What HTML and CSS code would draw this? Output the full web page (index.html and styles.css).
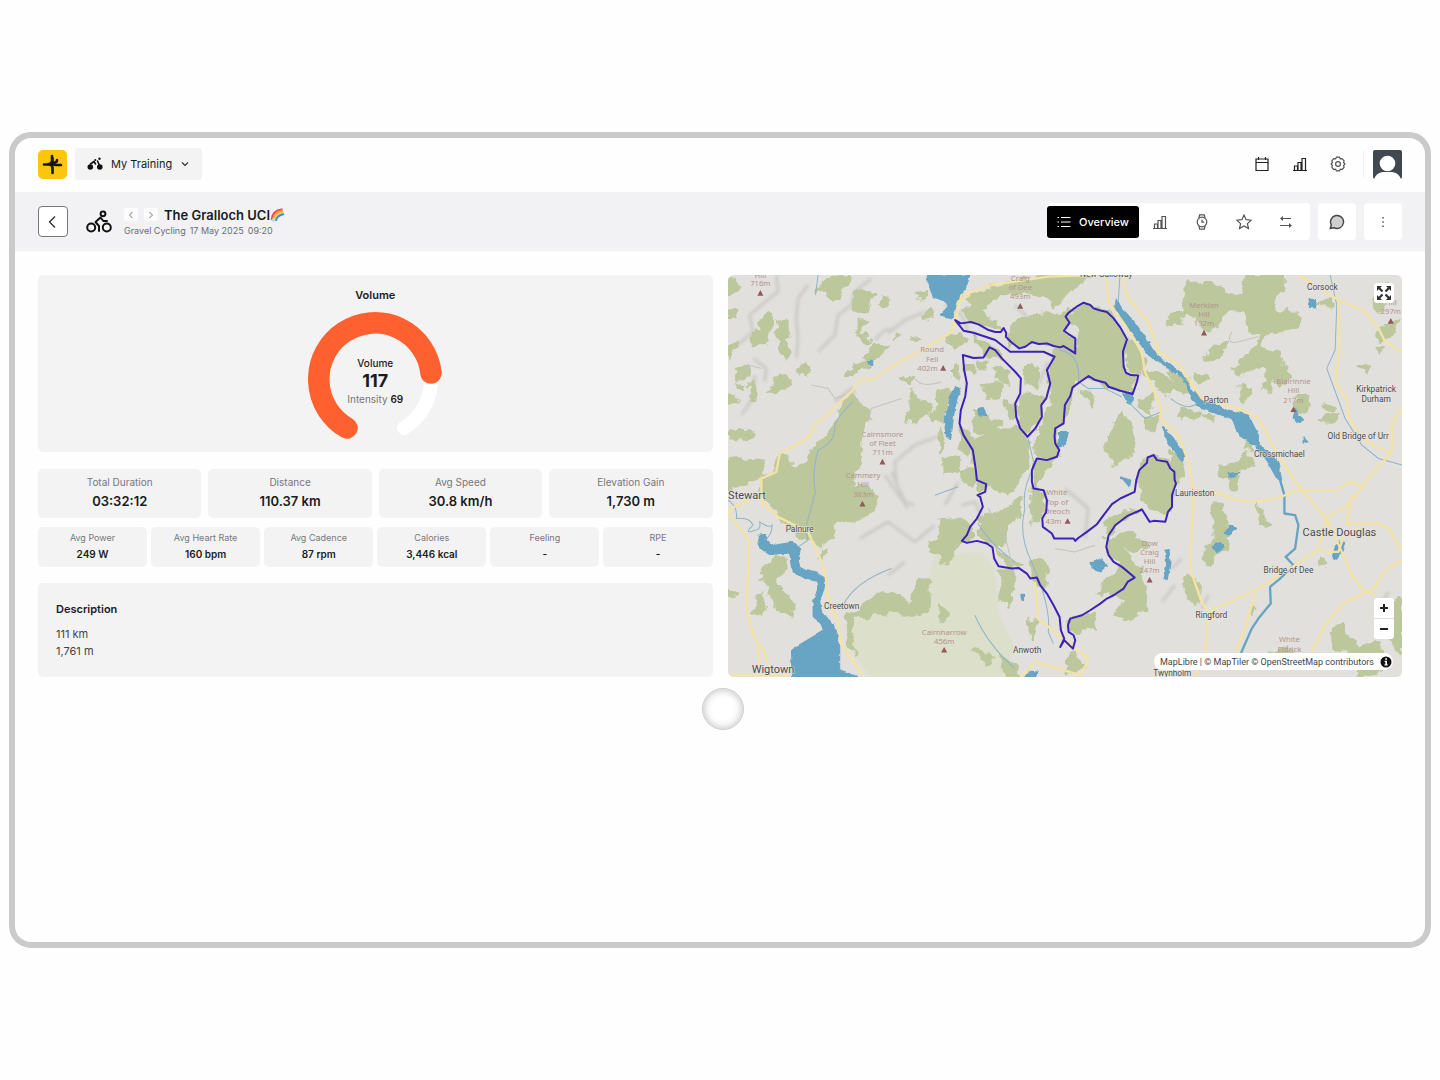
FILE: index.html
```html
<!DOCTYPE html>
<html lang="en">
<head>
<meta charset="utf-8">
<meta name="viewport" content="width=device-width, initial-scale=1">
<title>The Gralloch UCI</title>
<link rel="stylesheet" href="styles.css">
</head>
<body>
<div class="frame">
  <header class="topbar">
    <a class="logo" href="#" aria-label="Home">
      <svg viewBox="0 0 29 29" width="29" height="29"><rect width="29" height="29" rx="5" fill="#fcc60c"/><path d="M14 6v4.500q0 3.500-3.500 3.500M6 14.500h5q3.500 0 3.500 3.500v5M14.500 8v3.500q0 3.500 3.500 3.500h5M16.500 12.500q2.500 0 2.500-2.500" fill="none" stroke="#17150c" stroke-width="2.600" stroke-linecap="round"/></svg>
    </a>
    <button class="switcher" type="button">
      <svg viewBox="0 0 16 14" width="16" height="14"><circle cx="3.300" cy="10" r="2.800" fill="#111"/><circle cx="12.800" cy="10" r="2.800" fill="#111"/><path d="M3.500 7L7 4.500 8.500 7M10.500 4l2 4.500" fill="none" stroke="#111" stroke-width="1.600" stroke-linecap="round"/><circle cx="12.500" cy="1.800" r="1.200" fill="#111"/><circle cx="8.300" cy="3" r="1" fill="#111"/></svg>
      <span>My Training</span>
      <svg viewBox="0 0 8 8" width="8" height="8"><path d="M1 2.500l3 3 3-3" fill="none" stroke="#333" stroke-width="1.200"/></svg>
    </button>
    <nav class="tools" aria-label="Tools">
      <a href="#" aria-label="Calendar"><svg viewBox="0 0 16 16" width="16" height="16"><path d="M2 3h12v11.500H2zM2 6.500h12M4.500 1v3M11.500 1v3" class="line"/></svg></a>
      <a href="#" aria-label="Statistics"><svg viewBox="0 0 16 16" width="16" height="16"><path d="M1 14.500h14M2.500 14v-4h3v4M6 14V6.500h3V14M10 14V2.500h3.500V14" class="line"/></svg></a>
      <a href="#" aria-label="Settings"><svg viewBox="0 0 16 16" width="16" height="16"><circle cx="8" cy="8" r="2.400" class="line soft"/><path d="M6.500 1.200h3l.8 1.600 1.800-.2 2 2.200-.5 1.700 1.300 1.500-1.300 1.600.5 1.700-2 2.200-1.800-.3-.8 1.600h-3l-.9-1.600-1.800.3-2-2.200.6-1.700L1.100 8l1.300-1.500-.6-1.700 2-2.200 1.800.2z" class="line soft"/></svg></a>
    </nav>
    <a class="avatar" href="#" aria-label="Profile">
      <svg viewBox="0 0 29 29" width="29" height="29"><rect width="29" height="29" rx="2" fill="#424850"/><circle cx="14.500" cy="13.500" r="7.800" fill="#fff"/><path d="M1 29q2-6 9-7h9q7 1 9 7z" fill="#fff"/></svg>
    </a>
  </header>

  <section class="subbar">
    <button class="back" type="button" aria-label="Back"><svg viewBox="0 0 14 14" width="14" height="14"><path d="M9 1.500L3.500 7 9 12.500" fill="none" stroke="#222" stroke-width="1.200"/></svg></button>
    <svg class="sport" viewBox="0 0 26 24" width="26" height="24"><g fill="none" stroke="#111" stroke-width="2" stroke-linecap="round" stroke-linejoin="round"><circle cx="5.200" cy="17.500" r="4"/><circle cx="20.800" cy="17.500" r="4"/><circle cx="17" cy="3.800" r="2.400"/><path d="M13 21v-5L9.500 12l5-4.500 2.800 3.500H21"/></g></svg>
    <div class="heading">
      <div class="title-row">
        <button class="step" type="button" aria-label="Previous"><svg viewBox="0 0 8 8" width="8" height="8"><path d="M5.500 1l-3 3 3 3" fill="none" stroke="#777"/></svg></button>
        <button class="step" type="button" aria-label="Next"><svg viewBox="0 0 8 8" width="8" height="8"><path d="M2.500 1l3 3-3 3" fill="none" stroke="#777"/></svg></button>
        <h1>The Gralloch UCI</h1>
        <svg viewBox="0 0 15 14" width="15" height="14" aria-label="Rainbow"><g fill="none" stroke-width="1.900"><path d="M1.500 12Q2 2.500 12.500 1.200" stroke="#e8533f"/><path d="M3 12.500Q3.500 4.500 13 2.800" stroke="#f39a3b"/><path d="M4.500 13Q5 6 13.500 4.400" stroke="#f0d255"/><path d="M6 13Q6.500 7.500 14 6" stroke="#3f93d0"/></g><circle cx="3.500" cy="12" r="1.800" fill="#b9d4e8"/></svg>
      </div>
      <p class="meta"><span>Gravel Cycling</span><span>17 May 2025</span><span>09:20</span></p>
    </div>
    <div class="tabs">
      <button class="tab tab-active" type="button"><svg viewBox="0 0 14 12" width="14" height="12"><path d="M4 1.500h9.500M4 6h9.500M4 10.500h9.500M.5 1.500H2M.5 6H2M.5 10.500H2" fill="none" stroke="#fff" stroke-width="1.200"/></svg><span>Overview</span></button>
      <button class="tab" type="button" aria-label="Charts"><svg viewBox="0 0 16 16" width="16" height="16"><path d="M1 14.500h14M2.500 14v-4h3v4M6 14V6.500h3V14M10 14V2.500h3.500V14" class="line soft"/></svg></button>
      <button class="tab" type="button" aria-label="Device"><svg viewBox="0 0 16 16" width="16" height="16"><circle cx="8" cy="8" r="4.800" class="line soft"/><path d="M5 4l.6-3.200h4.800L11 4M5 12l.6 3.200h4.800L11 12M8 5.500V8.200h2.200" class="line soft"/></svg></button>
      <button class="tab" type="button" aria-label="Favourite"><svg viewBox="0 0 16 16" width="16" height="16"><path d="M8 1l2.100 4.700 5.100.5-3.800 3.400 1.100 5L8 12l-4.500 2.600 1.100-5L.8 6.200l5.100-.5z" class="line soft"/></svg></button>
      <button class="tab" type="button" aria-label="Compare"><svg viewBox="0 0 16 16" width="16" height="16"><path d="M4 4.500h9M2 11.500h9" class="line soft"/><path d="M2 4.500L5 2v5zM14 11.500L11 9v5z" fill="#555"/></svg></button>
    </div>
    <button class="tile-button" type="button" aria-label="Comments"><svg viewBox="0 0 16 16" width="16" height="16"><path d="M1.200 14.500L2.300 11A6.500 6.500 0 1 1 5 13.700z" fill="#cfcfcf" stroke="#444" stroke-width="1.400" stroke-linejoin="round"/></svg></button>
    <button class="tile-button" type="button" aria-label="More"><svg viewBox="0 0 16 16" width="16" height="16"><path d="M7.300 3h1.500v1.500H7.300zM7.300 7.300h1.500v1.500H7.300zM7.300 11.500h1.500V13H7.300z" fill="#555"/></svg></button>
  </section>

  <main class="content">
    <div class="summary">
      <section class="card volume">
        <h2>Volume</h2>
        <div class="gauge">
          <svg viewBox="0 0 134 134" width="134" height="134"><g fill="none" stroke-linecap="round"><path d="M123 67A56 56 0 0 1 96 116" stroke="#fff" stroke-width="14"/><path d="M39 116A56.300 56.300 0 1 1 123 61" stroke="#fe602f" stroke-width="21.500"/></g></svg>
          <div class="gauge-text"><span class="gauge-name">Volume</span><strong>117</strong><span class="intensity">Intensity <b>69</b></span></div>
        </div>
      </section>
      <dl class="stats stats-main">
        <div class="card"><dt>Total Duration</dt><dd>03:32:12</dd></div>
        <div class="card"><dt>Distance</dt><dd>110.37 km</dd></div>
        <div class="card"><dt>Avg Speed</dt><dd>30.8 km/h</dd></div>
        <div class="card"><dt>Elevation Gain</dt><dd>1,730 m</dd></div>
      </dl>
      <dl class="stats stats-minor">
        <div class="card"><dt>Avg Power</dt><dd>249 W</dd></div>
        <div class="card"><dt>Avg Heart Rate</dt><dd>160 bpm</dd></div>
        <div class="card"><dt>Avg Cadence</dt><dd>87 rpm</dd></div>
        <div class="card"><dt>Calories</dt><dd>3,446 kcal</dd></div>
        <div class="card"><dt>Feeling</dt><dd>-</dd></div>
        <div class="card"><dt>RPE</dt><dd>-</dd></div>
      </dl>
      <section class="card description">
        <h2>Description</h2>
        <p>111 km<br>1,761 m</p>
      </section>
    </div>

    <section class="map" aria-label="Route map">
      <svg class="map-canvas" viewBox="0 0 2022 1206" preserveAspectRatio="xMidYMid slice">
        <defs>
          <filter id="soften" x="-10%" y="-10%" width="120%" height="120%"><feGaussianBlur stdDeviation="5"/></filter>
          <filter id="rugged" x="0" y="0" width="100%" height="100%"><feTurbulence type="fractalNoise" baseFrequency="0.03" numOctaves="3" seed="4"/><feDisplacementMap in="SourceGraphic" scale="34" xChannelSelector="R" yChannelSelector="G"/></filter>
          <filter id="ripple" x="0" y="0" width="100%" height="100%"><feTurbulence type="fractalNoise" baseFrequency="0.05" numOctaves="2" seed="9"/><feDisplacementMap in="SourceGraphic" scale="12" xChannelSelector="R" yChannelSelector="G"/></filter>
        </defs>
        <rect width="2022" height="1206" fill="#e2e0dc"/>

        <!-- hill shading -->
        <g class="shade" filter="url(#soften)">
          <path d="M145 0L150 50 100 90 65 120 75 170 40 200 0 230M240 30L210 70 205 130 210 190 205 250M430 10L380 50 370 90 330 120 320 180 270 230M480 175L530 135 590 110M440 195L470 165 500 165M640 480L560 510 500 560 505 620M490 590L530 680 560 690M75 250L115 280 110 320M40 420L75 370 80 300M380 360L370 340 320 380M470 600L540 700"/>
          <path d="M650 90L700 120 720 170M860 90L900 130 890 190M960 260L930 330M700 690L740 680 760 720M1010 640L1080 700 1070 790M1980 950L1940 1010M1330 880L1360 850M1440 960L1420 1000"/>
          <path d="M395 790L480 740 560 800 620 750M390 1070Q400 1010 470 1030Q440 1080 400 1090M1300 980L1340 930M530 860L480 900M690 620L650 690"/>
        </g>
        <g class="hill-green" filter="url(#soften)"><path d="M350 1040L480 1000 590 960 620 840 760 830 800 880 810 1010 860 1120 820 1206 430 1206 370 1130z"/></g>

        <!-- woodland -->
        <g class="wood" filter="url(#rugged)">
          <rect class="extent" width="2022" height="1206"/>
          <g transform="translate(0 -15)">
            <path d="M0 25l20 0 15 30-20 22-15-2zM0 120l28 2-5 22-23 3zM100 150l20-28 17 15-10 40-20 45-40 4 8-35 25-5zM150 150l25 5 3 45-18 5-14-25zM165 208l15 15 2 30-12 15-10-20zM0 230l30-22-5 20-25 32zM285 25l75-10 0 25-22 10-5 38-30-5-10-25-25 5zM380 70l55-8-3 38-22 30-33-14zM385 145l30 10-15 10-5 25 25 8 12 20-20 5-25-30zM465 75l20-2-8 30-18 10zM560 75l38-5-10 12zM590 125l20-5 8 22-35 5zM440 225l45 0-25 25-40 25-12-10zM545 205l30-5-10 14zM500 190l14-2-20 20zM360 310l20-30 30-3 30-30-20 40-40 20-22 15zM215 280l22 0 0 35-26-5zM20 300l40-10 5 25-43 10zM150 310l25 10 5 30-38 15-20 8 20-35zM70 340l8-15 5 40-5 25-12-10zM25 345l30-2-5 18-25-8zM0 375l32 15-30 15zM5 480l60 0 12 18-30 12-40-5zM515 330l30-10 18 5-10 20zM550 360l20 30 40 15-5 30-30 5-5 20-40-10 15-40zM635 365l30-10 5 30-20 40-5 25-35-5 5-25 20-15zM640 570l50-10v40l-40 0z"/>
            <path d="M345 395l30-20 10 10 25 30 20 35-20 10-15 65 5 50-25 60-60 60 3 100-40 30-70-30-70-80-45-50 10-50 40-10 10-50 30-5 5 35 40 0 15-40 20-20 60-60z"/>
            <path d="M0 575l60-10 48 5-5 40-50 30-53 20zM320 700l20-45 60-10 50 35-15 40-60 40-50-5-20-30z"/>
          </g>
          <g transform="translate(636 -15)">
            <path d="M80 80l80-30 150-35 140 0-70 60-40 35-15-20-70-30-80 20-40 25-15 40-25 5zM230 150l80-25 70 10 10 25-18 25 33 15 0 52-45-20-80-15-80 10 20-50zM377 130l50-30 75 27 58 80-12 50 10 50 20 10-3 55-80-22-50-35-50 20-60-50 5-45 80 0 0-65-35-22 18-30zM550 210l30 10 30 50-10 40-30-10zM260 370l45 10 0 50-40 60-30-30 0-60zM330 290l60 30 0 60-30 30-30-10zM385 330l20 20-15 40-15 60-30 20 0 60 10 30-60 5-10-30 20-80 40-80zM108 540l-20-25 60-25 90-20 25 30 5 80-25 50-40 40-60-20-25 15zM545 425l20 30 20 60-20 50-40 20-30-50 20-60zM590 600l30-40 30-5 50 30 10 50-20 90-60-5-25-40zM20 200l40-10 20 20-40 20zM100 200l60 30 30 30-50 0zM110 270l30 5-5 30-20-5zM130 340l50 0 0 40-40 10zM100 420l80 40-20 40-60-20zM200 390l25 20 0 30-25-10zM610 300l60 10 40 40-30 20-50-40zM670 150l50-30 0 45-40 5zM600 390l40-20-15 60-30-20zM610 440l50 0-20 50-20-20zM430 360l30 20-10 30-15-20zM60 470l40 40-20 50-20-30zM290 570l60-15-40 60-35 40z"/>
            <path d="M70 120l60 10 60 45-50-5-60-25zM40 290l20 10-5 25-20-15zM75 285l25 0 0 20-25 0zM160 290l40 20 10 35-40-20zM250 300l20-20 30 30-10 40-30-10zM0 470l20 40-20 40zM90 500l30 10 30 50-50 20zM340 320l50-20 20 30-60 10z"/>
          </g>
          <g transform="translate(1326 -15)">
            <path d="M50 40l70-5 40 30 60 5 10-55 110 0 0 40-25 35-5 35 40-5 40 25-15 25-90 25-20 30 60 30 35 65-25 25-40-20-15-30-75 5 5-30 50-40 10-30-40-20-5-60-60 10-25 45-30 15-20-35-50-40zM0 135l50-20-20 40-30 10zM115 235l60-20-30 50-40 5zM70 310l35 0 5 20-30 10zM190 290l25 0-10 30zM210 345l35 15-30 40zM280 335l20-10 0 35-20-5zM0 305l50 20 10 40-40-10zM30 410l65 20-20 15-45-5zM100 435l35 5-5 15zM380 375l35 0 0 40-35 20-15-30zM440 100l40-15 0 25zM600 90l30-10 15 30-25 15zM625 180l65-30-30 50-25 10zM560 290l42-5-10 20zM620 230l20 0-10 15zM0 535l40 50 5 35-45 10zM225 510l20 0 0 30-25-5zM145 590l70-10-20 55-50-20zM460 400l40 20-20 10zM450 445l55-10-20 20zM170 600l60-50 20 30-50 30zM125 700l25 0 25 80-5 60-40 10-10 35-20-10 5-40 30-30 0-50zM265 700l10 35 22 25-28-5zM175 625l25-10 0 40-20-5zM45 920l40 10 0 70-20 10-25-55zM240 1010l15 0-10 30zM450 860l20 0-5 30-18-5zM480 1095l30-30 20 30 40 40 40-20 50 50-10 30-40-5-60-40-50-10zM625 990l70 0v160l-20-10-20-50-30-50zM300 1150l50-20 20 20-60 5zM560 1180l60 10-20 30-40-5z"/>
          </g>
          <g transform="translate(0 585)">
            <path d="M110 290l40-35 30 10-5 40-30 15 15 30 45 50-15 40-50-30-20-60-20-20zM80 380l20-15 15 50-10 20-30-5zM0 365l20 0 0 12-20 0zM285 240l10-5-5 30-10-2zM260 70l20-10 0 50 30-20-20 80-30-30zM645 160l45-15 0 60-60-10zM605 215l30-10 55 20-30 55-30-35-25-5zM440 380l30-20 40 15 35 25 20-60 30-10 10 40-5 50-50 15-50-10-30 10-35-10-25 15-40-5zM350 440l30-20-10 60 15 70-25-25zM155 150l60-10 25 20-50 10z"/>
          </g>
          <g transform="translate(636 585)">
            <path d="M0 150l70-5 30 50-15 20-85 10zM0 225l60-10-30 50-30 15zM115 145l80-30 50-40-10 60-30 30-10 50-30 20-50-40zM170 240l75 45-35 10zM180 300l40 0-5 60-10 50-25-20zM270 270l30-10 25 40-15 60-30-30zM485 160l60-40 60 0-50 25-50 40zM500 200l60-15 60 40-65 15 30 40 35 60-5 80-60 30-35-15 30-40-20-20-60-5 20-30 60-60-50-30zM270 60l40 0-10 90-20 10-10-60zM390 445l70-20 10 50-50 0-20 20zM260 450l30 0-15 60zM380 560l25-15 25 45-50 25zM180 550l50 30 5 40-50-10zM100 540l60 20-20 20zM0 400l20 40-20 20zM60 0l60 0-20 50-30-10z"/>
          </g>
        </g>

        <!-- water -->
        <g class="water" filter="url(#ripple)">
          <rect class="extent" width="2022" height="1206"/>
          <path d="M597 0H726L705 60 690 75 672 130 636 120 660 95 655 80 615 65 600 25z"/>
          <path d="M685 335L697 340 680 395 668 490 655 488 648 440 660 400 668 350z"/>
          <path d="M1164 70L1180 100 1210 130 1250 185 1280 235 1360 295 1380 330 1420 375 1450 385 1500 405 1560 420 1590 480 1590 510 1620 530 1650 565 1660 615 1645 610 1615 555 1580 510 1530 480 1510 430 1420 400 1390 370 1365 310 1320 280 1260 240 1205 165 1160 100z"/>
          <path d="M748 400l15-3 13 25-25-3zM990 472h30l-8 35-20 10zM1186 355l28-5-3 35-16-5zM1302 455l30 30 40 55-10 20-40-50zM1178 605l30 10-5 20zM1742 72l22 2-3 25-18-2zM1702 400l10 20 14 15-20 8-12-15zM1724 485l14 15-14 4zM1447 812l30-10 10 15-20 15zM1490 770l20-20 15 10-25 20zM1502 595l30-5-10 15-20 3zM1831 797l18 5-8 25-16 25-14-4 6-25zM1088 860l35-12 14 25-20 18-25-10zM1312 825l10-2 3 40-8 50-10-2 8-40zM878 957l8 0v20l-6-3zM890 1206l20-18 20 3-10 15zM418 258l13-3v13l-10-2z"/>
          <path d="M90 780l20-2 8 18 15 15 60-10 25 20-8 30 5 25 50 17 25 15 0 25-15 45 5 30 35 40 20 60 0 75 50 20 15 35H195l-5-115 100-60-35-40 0-40 15-45-5-20-60-20-15-20-5-45-60 5-30-20z"/>
        </g>
        <g class="stream">
          <path d="M0 675q30 20 25 55q40-5 50 20q-30 30 5 15q20 0 15-25q30 20 37 10q0 30-22 45M270 0L262 60M375 380Q330 420 320 450Q325 500 270 525Q250 600 262 650L235 750M210 815l30-20-5-25M345 990Q380 920 490 880M620 660l70-25M900 490Q910 540 920 570Q880 640 890 700Q870 780 910 860Q970 1000 960 1070L975 1105M750 745Q780 800 860 860M740 1020Q780 1110 860 1180"/>
          <path d="M1175 0L1170 80M995 225Q1060 240 1050 320L1080 340 1130 340 1180 365M1200 380L1250 430 1300 410M1805 0L1825 90 1820 225 1795 280 1850 430 1900 510 1950 550 2022 570M1326 370q50 40 80 15"/>
        </g>
        <path class="river" d="M1648 590L1668 660 1668 715 1700 720 1710 750 1700 820 1672 845 1695 870 1655 910 1625 935 1627 985 1590 1030 1570 1060 1535 1140"/>

        <!-- roads -->
        <g class="road">
          <path d="M726 60L690 80 685 130 672 170 600 215 480 280 435 315 400 310 370 350 260 450 240 490 155 535 145 590 100 610 100 680 150 725 240 770 290 880 300 970 330 1040 340 1110 410 1206M0 705L60 675 100 650M0 710L60 790 62 860 55 1000 80 1090 110 1130 125 1190M90 1110L95 1180M0 1200H180"/>
          <path d="M670 170L700 60 790 30 960 5 1100 0M1133 0L1140 80 1190 150 1240 230 1250 290 1300 400 1295 430 1350 480 1380 560 1395 640 1385 880 1420 980 1440 1010M1180 0L1200 70 1260 140 1290 230 1350 265 1400 340 1420 370 1530 400 1590 430 1650 540 1700 620 1800 740 1840 830 1870 900 1900 940 1940 960"/>
          <path d="M1710 0L1830 75 1910 110 1950 160 1970 200 2022 230M1830 75L1832 240 1820 320 1855 370 1860 430 1910 500 1990 535M2022 400L1990 440 1990 530 1920 610 1860 690 1795 725 1770 825 1700 870 1580 945 1440 1010 1430 1140 1400 1206M1455 645Q1540 700 1660 665L1700 645 1830 645 1860 620 1905 630 1940 585M1870 660L1855 745 1950 745 1980 760 2022 830M1780 830h50l20-60M2022 855Q1960 880 1940 940L1850 980 1790 1050 1750 1130M1580 955L1550 1060 1520 1140M880 1206L920 1160 1060 1200 1080 1150 1030 1110 930 1030 920 920"/>
        </g>
        <path class="lane" d="M0 1020q-10-20 0-30M20 330l40-60 40 10M250 330l50 10 20 30 30-10M640 320q-60 20-80-10M1510 170q-20 40 20 30t60-15M1980 20q-20 10-30 10M780 700l50 80 30 120M980 820l60 10 60-20M420 440l10-40 90-30"/>

        <!-- peaks -->
        <path class="peak-mark" d="M97 45l9 17h-18zM645 270l9 17h-18zM463 551l9 17h-18zM403 677l9 17h-18zM648 1115l9 17h-18zM876 84l9 17h-18zM1018 729l9 17h-18zM1264 905l9 17h-18zM1427 164l9 17h-18zM1695 394l9 17h-18zM1987 129l9 17h-18z"/>
        <g class="peak-label">
          <text x="97" y="8">Hill</text><text x="97" y="34">716m</text>
          <text x="612" y="232">Round</text><text x="612" y="260">Fell</text><text x="598" y="288">402m</text>
          <text x="463" y="485">Cairnsmore</text><text x="463" y="513">of Fleet</text><text x="463" y="541">711m</text>
          <text x="405" y="610">Cammery</text><text x="405" y="637">Hill</text><text x="405" y="665">383m</text>
          <text x="648" y="1078">Cairnharrow</text><text x="648" y="1105">456m</text>
          <text x="876" y="18">Craig</text><text x="876" y="44">of Dee</text><text x="876" y="73">493m</text>
          <text x="986" y="661">White</text><text x="986" y="690">Top of</text><text x="986" y="718">Dreoch</text><text x="976" y="745">43m</text>
          <text x="1264" y="811">Dow</text><text x="1264" y="839">Craig</text><text x="1264" y="866">Hill</text><text x="1264" y="894">247m</text>
          <text x="1427" y="99">Merklan</text><text x="1427" y="127">Hill</text><text x="1427" y="154">192m</text>
          <text x="1695" y="327">Blairinnie</text><text x="1695" y="355">Hill</text><text x="1695" y="383">217m</text>
          <text x="1987" y="90">Hill</text><text x="1987" y="117">297m</text>
          <text x="1683" y="1101">White</text><text x="1683" y="1129">Eldrick</text>
        </g>

        <!-- recorded route -->
        <path class="route" transform="translate(636 -15)" d="M45 150L62 160 92 156 115 163 145 180 165 186 182 186 190 174 198 188 197 200 212 215 237 235 255 230 275 216 295 222 320 220 340 228 360 232 370 228 390 240 405 250 405 205 385 192 371 182 388 158 376 140 385 128 412 108 430 98 450 105 460 115 475 120 500 126 520 145 540 172 560 208 548 245 550 290 557 308 572 315 594 316 590 335 577 372 540 362 505 350 495 338 465 330 445 318 420 335 397 352 390 378 374 405 370 460 345 475 343 500 345 520 357 540 350 560 320 570 290 565 275 600 275 635 280 655 310 660 320 690 318 725 306 745 308 770 335 790 342 805 400 805 405 812 412 805 440 785 470 762 490 735 515 702 540 685 583 665 588 630 597 600 620 578 622 562 640 555 650 570 680 575 690 595 702 605 703 630 707 640 695 675 695 710 683 725 675 755 640 752 628 755 605 718 560 738 525 765 505 795 498 830 505 855 520 875 545 890 583 922 562 935 550 955 520 975 500 985 480 1000 450 1020 425 1035 390 1045 383 1065 385 1085 400 1095 405 1110 398 1135 372 1110 360 1130 372 1105 362 1080 358 1040 340 1005 320 970 300 945 290 922 270 925 260 910 235 893 215 895 175 888 162 865 157 832 140 820 110 812 80 818 65 812 80 795 90 770 110 745 128 710 120 680 112 675 135 665 138 642 110 630 107 600 98 540 70 495 58 460 62 420 75 380 80 340 72 300 68 255 100 264 130 262 148 232 165 240 185 265 225 305 242 325 240 370 225 400 228 440 240 475 262 500 285 475 305 440 303 405 318 385 330 340 320 300 343 260 310 245 210 245 165 210 100 188 70 182z"/>

        <!-- towns -->
        <g class="town">
          <text x="1134" y="6">New Galloway</text>
          <text x="1782" y="45">Corsock</text>
          <text x="1943" y="352">Kirkpatrick</text><text x="1943" y="382">Durham</text>
          <text x="1889" y="493">Old Bridge of Urr</text>
          <text x="1463" y="385">Parton</text>
          <text x="1653" y="547">Crossmichael</text>
          <text x="1399" y="662">Laurieston</text>
          <text x="215" y="769">Palnure</text>
          <text x="341" y="1002">Creetown</text>
          <text x="897" y="1132">Anwoth</text>
          <text x="1680" y="894">Bridge of Dee</text>
          <text x="1449" y="1027">Ringford</text>
          <text x="1332" y="1201">Twynholm</text>
        </g>
        <g class="town town-large">
          <text x="57" y="672">Stewart</text>
          <text x="135" y="1194">Wigtown</text>
          <text x="1833" y="781">Castle Douglas</text>
        </g>
      </svg>
      <button class="fullscreen" type="button" aria-label="Full screen"><svg viewBox="0 0 20 20" width="20" height="20"><path d="M3 3h5L6.300 4.700l3 3-1.600 1.600-3-3L3 8zM17 3v5l-1.700-1.700-3 3-1.600-1.600 3-3L12 3zM3 17v-5l1.700 1.700 3-3 1.600 1.600-3 3L8 17zM17 17h-5l1.700-1.700-3-3 1.600-1.600 3 3L17 12z" fill="#333"/></svg></button>
      <div class="zoom-controls">
        <button type="button" aria-label="Zoom in"><svg viewBox="0 0 20 20" width="20" height="20"><path d="M6 10h8M10 6v8" stroke="#222" stroke-width="2"/></svg></button>
        <button type="button" aria-label="Zoom out"><svg viewBox="0 0 20 20" width="20" height="20"><path d="M6 10h8" stroke="#222" stroke-width="2"/></svg></button>
      </div>
      <div class="attribution"><span><a href="#">MapLibre</a> | <a href="#">© MapTiler</a> <a href="#">© OpenStreetMap contributors</a></span><svg viewBox="0 0 12 12" width="12" height="12"><circle cx="6" cy="6" r="5.500" fill="#111"/><path d="M5.200 2.200h1.800v1.600H5.200zM4.600 4.800H7v3.400h.7v1.200H4.500V8.200h.8V6h-.7z" fill="#fff"/></svg></div>
    </section>
  </main>
  <div class="pointer"></div>
</div>
</body>
</html>
```
FILE: styles.css
```css
* { box-sizing: border-box; }
body {
  margin: 0;
  min-height: 100vh;
  padding: 132px 9px;
  display: flex;
  background: #fefefe;
  color: #1b1b1d;
  font-family: Inter, "Liberation Sans", sans-serif;
  font-size: 11px;
}
h1, h2, p, dl, dd { margin: 0; }
button { border: 0; padding: 0; background: none; color: inherit; font: inherit; display: flex; align-items: center; justify-content: center; }
a { color: inherit; text-decoration: none; }
svg { display: block; flex: none; }
.line { fill: none; stroke: #222; stroke-width: 1.2; }
.soft { stroke: #555; }

.frame {
  position: relative;
  flex: 1;
  min-width: 0;
  border: 6px solid #cacaca;
  border-radius: 22px;
  background: #fefefe;
}

.topbar { display: flex; align-items: center; height: 54px; padding: 0 23px 2px; }
.switcher { gap: 8px; height: 32px; margin-left: 8px; padding: 0 13px 0 12px; border-radius: 3px; background: #f3f3f3; }
.switcher span { margin-right: 1px; }
.tools { display: flex; gap: 22px; margin-left: auto; padding-right: 17px; border-right: 1px solid #f0f0f0; height: 28px; align-items: center; }
.avatar { margin-left: 9px; }

.subbar { display: flex; align-items: center; height: 59px; padding: 0 23px; background: #f2f2f4; }
.back { width: 30px; height: 31px; border: 1px solid #777; border-radius: 4px; background: #fff; }
.sport { margin-left: 18px; }
.heading { margin-left: 12px; }
.title-row { display: flex; align-items: center; height: 18px; }
.step { width: 14px; height: 13px; margin-right: 6px; border-radius: 2px; background: #fcfcfc; }
h1 { font-size: 13px; line-height: 18px; font-weight: 600; }
.meta { display: flex; gap: 4px; font-size: 9px; line-height: 14px; color: #6c6c70; }
.tabs { display: flex; align-items: center; height: 37px; margin-left: auto; padding-right: 3px; border-radius: 4px; background: #fff; }
.tab { width: 42px; height: 32px; }
.tab-active { gap: 8px; width: 92px; border-radius: 3px; background: #000; color: #fff; font-weight: 500; }
.tile-button { width: 38px; height: 37px; margin-left: 8px; border-radius: 4px; background: #fff; }

.content { display: grid; grid-template-columns: 1fr 1fr; gap: 15px; padding: 24px 23px; }
.summary { display: flex; flex-direction: column; }
.card { border-radius: 5px; background: #f3f3f4; }
h2 { font-size: 11px; line-height: 16px; font-weight: 600; }
.volume { display: flex; flex-direction: column; align-items: center; gap: 9px; padding: 12px 0 6px; }
.gauge { display: grid; place-items: center; }
.gauge > * { grid-area: 1 / 1; }
.gauge-text { display: flex; flex-direction: column; align-items: center; line-height: 16px; font-size: 10px; padding-top: 4px; }
.gauge-name { font-weight: 500; }
.gauge-text strong { font-size: 18px; line-height: 20px; font-weight: 700; }
.intensity { color: #77777a; }
.intensity b { color: #1b1b1d; font-weight: 600; }

.stats { display: grid; text-align: center; color: #77777a; }
.stats dd { color: #1b1b1d; font-weight: 600; }
.stats-main { grid-template-columns: repeat(4, 1fr); gap: 7px; margin-top: 17px; }
.stats-main .card { padding: 4px 0 7px; }
.stats-main dt { font-size: 10px; line-height: 18px; }
.stats-main dd { font-size: 13px; line-height: 20px; }
.stats-minor { grid-template-columns: repeat(6, 1fr); gap: 4px; margin-top: 9px; }
.stats-minor .card { padding: 3px 0 5px; }
.stats-minor dt { font-size: 9px; line-height: 16px; }
.stats-minor dd { font-size: 10px; line-height: 16px; }
.description { flex: 1; margin-top: 16px; padding: 18px 18px 17px; }
.description p { margin-top: 9px; line-height: 17px; color: #444; }

.map { position: relative; display: flex; border-radius: 6px; overflow: hidden; background: #e2e0dc; }
.map-canvas { width: 100%; height: auto; }
.extent { fill: none; stroke: none; }
.wood { fill: #bdc79c; stroke: #bdc79c; stroke-width: 6; stroke-linejoin: round; }
.hill-green { fill: #dcdfca; }
.shade { fill: none; stroke: #cbcac8; stroke-width: 9; stroke-linejoin: round; }
.water { fill: #67a4c3; stroke: #67a4c3; stroke-width: 3; stroke-linejoin: round; }
.stream { fill: none; stroke: #8db4c8; stroke-width: 3; }
.river { fill: none; stroke: #67a4c3; stroke-width: 7; stroke-linejoin: round; }
.road { fill: none; stroke: #f3e3a5; stroke-width: 7; stroke-linejoin: round; }
.lane { fill: none; stroke: #c3c2be; stroke-width: 3; }
.route { fill: none; stroke: #3d22b8; stroke-width: 6; stroke-linejoin: round; }
.peak-mark { fill: #93585a; }
.peak-label { fill: #b29390; font-family: "Noto Sans", sans-serif; font-size: 23px; text-anchor: middle; }
.town { fill: #4b4b4b; font-family: Roboto, sans-serif; font-size: 25px; text-anchor: middle; paint-order: stroke; stroke: #e8e6e1; stroke-width: 3; }
.town-large { font-size: 33px; }
.fullscreen { position: absolute; top: 8px; right: 8px; width: 20px; height: 20px; border-radius: 3px; background: #fff; }
.zoom-controls { position: absolute; right: 8px; bottom: 38px; border-radius: 3px; background: #fff; }
.zoom-controls button + button { border-top: 1px solid #ddd; }
.attribution { position: absolute; right: 9px; bottom: 7px; display: flex; align-items: center; gap: 6px; height: 17px; padding: 0 1px 0 6px; border-radius: 9px; background: #fff; color: #444; font-family: Roboto, sans-serif; font-size: 9px; white-space: nowrap; }

.pointer { position: absolute; left: calc(50% - 18px); top: 550px; width: 42px; height: 42px; border: 1px solid #ccc; border-radius: 50%; background: #fff; box-shadow: inset 0 0 8px #bbb; }
```
